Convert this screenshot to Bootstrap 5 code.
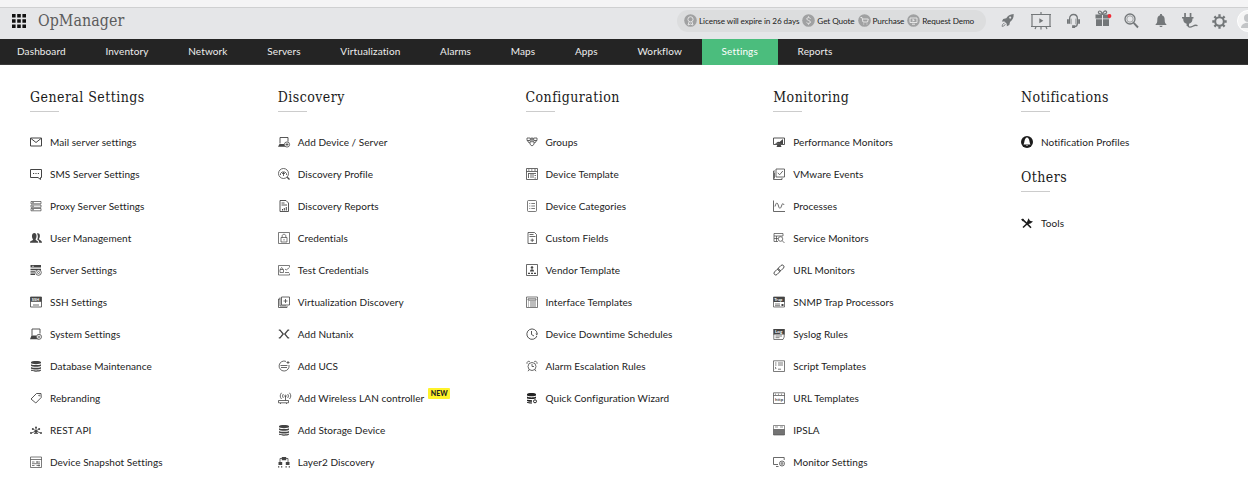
<!DOCTYPE html>
<html lang="en">
<head>
<meta charset="utf-8">
<meta name="viewport" content="width=device-width, initial-scale=1">
<title>OpManager</title>
<link href="https://cdn.jsdelivr.net/npm/bootstrap@5.3.0/dist/css/bootstrap.min.css" rel="stylesheet">
<style>
body{font-family:Lato,"Liberation Sans",sans-serif;font-size:10px;letter-spacing:.06px;line-height:16px;color:#222;background:#fff;overflow:hidden;height:486px}
svg{fill:none;stroke:currentColor;stroke-width:1;flex:none;display:block;overflow:visible}
svg .f{fill:currentColor;stroke:none}
svg .w{fill:#fff}
svg text{fill:currentColor;stroke:none;font-weight:700}
.strip{height:8px;background:#f4f4f5;border-bottom:1px solid #cfd0d1}
.topbar{height:31px;background:#e5e6e8;padding:0 0 6px 12px}
.brand{font-family:"Roboto Slab","DejaVu Serif Condensed",serif;font-weight:300;font-size:15.8px;line-height:24px;color:#5c5c5c;margin-left:12px}
.pill{height:22px;border-radius:11px;background:#dcddde;font-size:8.2px;letter-spacing:-.11px;color:#222;margin-left:auto;padding:0 10px 0 7px;width:309px}
.pill svg{color:#a0a1a2;margin-right:2px}
.pill span+svg{margin-left:3px}
.tools{color:#737779;width:262px;height:31px;position:relative}
.tools svg{position:absolute;top:4px}
.mainnav{height:26px;background:#242424;border-bottom:1px solid #3a3a3a}
.mainnav a{color:#eee;text-decoration:none;font-size:10px;letter-spacing:.12px;line-height:25px;padding:0 19.85px;white-space:nowrap}
.mainnav a:first-child{padding-left:17px}
.mainnav a.on{background:#4bbd7d;color:#fff;height:26px}
.menu{padding:21px 0 0 30px}
.menu>section{width:247.75px;flex:none}
.menu h2{font-family:"Roboto Slab","DejaVu Serif Condensed",serif;font-weight:400;font-size:14px;letter-spacing:.45px;line-height:22px;color:#1a1a1a;margin:0;white-space:nowrap}
.menu h2::after{content:"";display:block;width:29px;height:1px;background:#ccc;margin-top:3px}
.menu h2.second{margin-top:-8px}
.menu h2.second+ul{margin-top:15px}
.menu ul{margin:14px 0 0}
.menu li{height:32px;display:flex;align-items:center;gap:8px;white-space:nowrap}
.menu li svg{color:#444;width:12px;height:12px}
.newtag{background:#fff32a;color:#222;font-weight:900;font-size:7px;line-height:11px;border-radius:1px;width:22px;text-align:center;margin:-9px 0 0 -4px}
</style>
</head>
<body>
<div class="strip"></div>
<header class="topbar d-flex align-items-center">
  <svg width="14" height="14" viewBox="0 0 14 14" style="color:#111"><path class="f" d="M0 0h3.6v3.6H0zM5.2 0h3.6v3.6H5.2zM10.4 0H14v3.6h-3.6zM0 5.2h3.6v3.6H0zM5.2 5.2h3.6v3.6H5.2zM10.4 5.2H14v3.6h-3.6zM0 10.4h3.6V14H0zM5.2 10.4h3.6V14H5.2zM10.4 10.4H14V14h-3.6z"/></svg>
  <div class="brand">OpManager</div>
  <div class="pill d-flex align-items-center text-nowrap">
    <svg width="13" height="13" viewBox="0 0 13 13"><circle class="f" cx="6.5" cy="6.5" r="6.3"/><g stroke="#e5e5e5"><circle cx="6.5" cy="5.3" r="2.6"/><path d="M5 8l-1 3 2.5-1L9 11 8 8"/></g></svg><span>License will expire in 26 days</span>
    <svg width="13" height="13" viewBox="0 0 13 13"><circle class="f" cx="6.5" cy="6.5" r="6.3"/><path stroke="#e5e5e5" d="M8.500 4.700C8 3.200 4.700 3.300 4.700 4.900S8.500 6.400 8.500 8.100 5 9.700 4.500 8.300M6.500 2.300v1.300M6.500 9.400v1.300"/></svg><span>Get Quote</span>
    <svg width="13" height="13" viewBox="0 0 13 13"><circle class="f" cx="6.500" cy="6.500" r="6.300"/><path stroke="#e5e5e5" d="M2.500 3.500H4l1 4.500h4.500l.8-3H4.500M5.300 10h.9M8.500 10h.9"/></svg><span>Purchase</span>
    <svg width="13" height="13" viewBox="0 0 13 13"><circle class="f" cx="6.500" cy="6.500" r="6.300"/><path stroke="#e5e5e5" d="M3 4h7v4.500H3zM5 10.200h3"/><path fill="#e5e5e5" stroke="none" d="M5.500 4.800L8 6.200 5.500 7.700z"/></svg><span>Request Demo</span>
  </div>
  <div class="tools overflow-hidden align-self-start">
    <svg style="left:15px;top:5px" width="14" height="15" viewBox="0 0 16 17"><path class="f" d="M14.500 1C10 1.200 8 3 6 6L2.500 6.800 1 9.500l3 .2 2.500 2.500.2 3 2.800-1.600.8-3.500C13 8 14.700 5.500 14.500 1z"/><circle cx="10.500" cy="5.200" r="1.200" fill="#e5e6e8" stroke="none"/><path d="M4 11.500c-2 .3-2.500 2-2.700 3.700 1.500-.2 3.300-.8 3.600-2.500"/></svg>
    <svg style="left:45px;top:3px" width="20" height="19" viewBox="0 0 20 19"><path stroke-width="1.200" d="M1 3.500h18v12H1zM0 3.500h20M0 15.500h20M10 1v2M10 16v2.500M5 16l-1 2M15 16l1 2"/><path class="f" d="M8.300 7.200l4 2.500-4 2.500z"/></svg>
    <svg style="left:81px;top:5px" width="13" height="16" viewBox="0 0 14 17"><path stroke-width="1.400" d="M2.800 11.500V6C2.800 0 11.200 0 11.200 6v5.500M11.200 11c0 2.500-1 3.500-3 3.500"/><path class="f" d="M0 6.500h2v5H0zM12 6.500h2v5h-2zM5.500 13h3.200v3H5.500z"/><path d="M4.500 6v6M9.500 6v6" stroke-width=".7"/></svg>
    <svg style="left:109px;top:2px" width="16" height="17" viewBox="0 0 16 17"><path class="f" d="M.5 4.500H7v4H.5zM8 4.500h6.500v4H8zM1 9.300h6V16H1zM8 9.300h6V16H8z"/><path stroke-width="1.200" d="M7.500 4.500C5 4.500 2.500 3 3.700 1.500S7 2 7.500 4.500c.5-2.500 2.500-4.500 3.800-3S10 4.500 7.500 4.500"/><circle cx="14.500" cy="6" r="1.900" fill="#f22a35" stroke="none"/></svg>
    <svg style="left:138px;top:5px" width="15" height="16" viewBox="0 0 15 16"><circle cx="6" cy="6" r="5" stroke-width="1.300"/><circle cx="6" cy="6" r="3.200" stroke-width=".6"/><path stroke-width="1.900" d="M9.700 9.900l4.300 4.600"/></svg>
    <svg style="left:169px;top:5px" width="12" height="15" viewBox="0 0 13 16"><path class="f" d="M5.500 1h2v1.200C10 3 10.500 5 10.500 7.500c0 3 .8 3.800 2 5V13H.5v-.5c1.200-1.200 2-2 2-5C2.500 5 3 3 5.500 2.200zM4.700 13.700h3.600c-.4 1.800-3.200 1.800-3.600 0z"/></svg>
    <svg style="left:195px" width="17" height="17" viewBox="0 0 17 17"><path class="f" d="M3.200 1h1.700v4h3.800V1h1.700v4H12.500v1.500h-1C11.500 9.500 10.500 11 8 11.800V14H5.600v-2.200C3 11 2.200 9.500 2.200 6.500H1V5h2.200z"/><path stroke-width="1.300" d="M6.800 13c.2 3 3.200 2.200 5 1.200s3-1.500 4.700-.5"/></svg>
    <svg style="left:226px;top:5px" width="15" height="17" viewBox="0 0 15 17"><circle cx="7.500" cy="8.500" r="4.300" stroke-width="2"/><path stroke-width="2.300" d="M7.500 1.300v2.500M7.500 13.200v2.500M.3 8.500h2.500M12.200 8.500h2.500M2.400 3.400l1.800 1.800M10.800 11.800l1.800 1.800M2.400 13.600l1.800-1.800M10.800 5.200l1.800-1.800"/></svg>
    <svg style="left:251px;top:2px" width="22" height="22" viewBox="0 0 22 22"><circle cx="11" cy="11" r="10.500" fill="#f5f5f5" stroke="#fff"/><circle cx="11" cy="8" r="4" fill="#c3c5c7" stroke="none"/><path fill="#c3c5c7" stroke="none" d="M4 18c0-7 14-7 14 0z"/></svg>
  </div>
</header>
<nav class="mainnav d-flex">
  <a href="#">Dashboard</a><a href="#">Inventory</a><a href="#">Network</a><a href="#">Servers</a><a href="#">Virtualization</a><a href="#">Alarms</a><a href="#">Maps</a><a href="#">Apps</a><a href="#">Workflow</a><a href="#" class="on">Settings</a><a href="#">Reports</a>
</nav>
<main class="menu d-flex">
  <section>
    <h2>General Settings</h2>
    <ul class="list-unstyled">
      <li><svg viewBox="0 0 12 12"><path d="M.5 2h11v8H.5zM1 2.500l5 4 5-4"/></svg><span>Mail server settings</span></li>
      <li><svg viewBox="0 0 12 12"><path d="M10.500 9.500V11.500L8 9.500H.5v-8h11v8h-1M3 5.500h1.200M5.400 5.500h1.200M7.800 5.500H9"/></svg><span>SMS Server Settings</span></li>
      <li><svg viewBox="0 0 12 12" style="stroke-width:.7"><path d="M1 1.500h10v2.300H1zM1 5h10v2.300H1zM1 8.500h10v2.300H1zM2 2.700h2M2 6.200h2M2 9.700h2"/></svg><span>Proxy Server Settings</span></li>
      <li><svg viewBox="0 0 12 12"><path class="f" d="M0 10.800c0-2.600 3-1.800 3-3.500C1.500 5.500 1.500 1 4.300 1S7 5.500 5.600 7.300c0 1.700 2.700 1 2.700 3.500zM7 1.500c3.300-1 3.500 3.500 2 5.300 0 1.700 3 1.200 3 4H9.200c0-2-1-2.600-2-3.200.9-1.800 1-4-.2-6.100z"/></svg><span>User Management</span></li>
      <li><svg viewBox="0 0 12 12"><path class="f" d="M.5 1h10.500v2.600H.5zM.5 4.700H11v1.500H.5zM.5 7.300H5v1.200H.5zM.5 9.500H5V11H.5z"/><path stroke="#fff" stroke-width=".6" d="M2 2.300h2"/><circle class="w" cx="8.500" cy="8.500" r="2.800" stroke-width=".8"/><circle cx="8.500" cy="8.500" r="1" stroke-width=".7"/></svg><span>Server Settings</span></li>
      <li><svg viewBox="0 0 12 12"><path stroke-width=".8" d="M.5 1h11v10H.5z"/><path class="f" d="M.5 1h11v4.800H.5z"/><text x="1.700" y="5" font-size="4" style="fill:#fff">SSH</text><path stroke-width=".8" d="M3 9h6"/></svg><span>SSH Settings</span></li>
      <li><svg viewBox="0 0 12 12"><path stroke-width=".9" d="M2 7.500V1h8v4.500"/><path class="f" d="M1.500 7.500h5V9.500H9v1.800H0z"/><circle class="w" cx="9" cy="8.800" r="2.500" stroke-width=".8"/><circle cx="9" cy="8.800" r=".8" stroke-width=".7"/></svg><span>System Settings</span></li>
      <li><svg viewBox="0 0 12 12"><path class="f" d="M1 2c0-1.500 10-1.500 10 0v1c0 1.500-10 1.500-10 0zM1 4.200c2 1.200 8 1.200 10 0v1.600c-1 1.300-9 1.300-10 0zM1 6.900c2 1.200 8 1.200 10 0v1.600c-1 1.300-9 1.300-10 0zM1 9.500c2 1.200 8 1.200 10 0v1c-1 1.600-9 1.600-10 0z"/></svg><span>Database Maintenance</span></li>
      <li><svg viewBox="0 0 12 12"><path stroke-width=".9" d="M1 7L6.500 1.500H11l.2 4L5.800 11z"/><circle cx="9.200" cy="3.500" r=".5" stroke-width=".7"/></svg><span>Rebranding</span></li>
      <li><svg viewBox="0 0 12 12"><path stroke-width=".8" d="M6 7V4M6 7L3 5M6 7l3-2M6 7L1.500 9M6 7l4.500 2M4 9.500h4"/><g class="f"><circle cx="6" cy="3.500" r="1"/><circle cx="2.800" cy="5" r="1"/><circle cx="9.200" cy="5" r="1"/><circle cx="1" cy="9" r="1"/><circle cx="11" cy="9" r="1"/><circle cx="6" cy="7.500" r="1.500"/></g></svg><span>REST API</span></li>
      <li><svg viewBox="0 0 12 12" style="stroke-width:.7"><path d="M.5 1h11v10.500H.5zM.5 3.500h11M2 6h2.500M2 9.500h2.500M6.500 6H10M6.500 9.500H10M7 5v2M9 8.500v2M2 7.700h8"/></svg><span>Device Snapshot Settings</span></li>
    </ul>
  </section>
  <section>
    <h2>Discovery</h2>
    <ul class="list-unstyled">
      <li><svg viewBox="0 0 12 12"><path stroke-width=".9" d="M2 7.500V1.500h8v4"/><path class="f" d="M1.500 8h4.500l.5 1.200H8v1.600H0z"/><circle class="w" cx="9" cy="8.500" r="2.600" stroke-width=".8"/><path stroke-width=".8" d="M7.500 8.500h3M9 7v3"/></svg><span>Add Device / Server</span></li>
      <li><svg viewBox="0 0 12 12" style="stroke-width:.8"><circle cx="5.500" cy="5.500" r="5"/><path stroke-width="1.300" d="M9.200 9.200l2.300 2.300"/><path d="M2.500 7V5.500L4 4h3l1.500 1.500V7M5.500 4v4M4 5.500h3"/></svg><span>Discovery Profile</span></li>
      <li><svg viewBox="0 0 12 12"><path stroke-width=".9" d="M2 .5h6l2.500 2.500v8.500H2zM3.500 3h3M3.500 5h5.500"/><path d="M4.500 10.500V9M6.300 10.500V8M8.300 10.500V7"/></svg><span>Discovery Reports</span></li>
      <li><svg viewBox="0 0 12 12" style="stroke-width:.7"><path d="M.5.5h11v11H.5zM3 5.500h6v4.500H3zM4.200 5.500V3.800c0-2 3.600-2 3.600 0v1.700M6 7v1.500"/></svg><span>Credentials</span></li>
      <li><svg viewBox="0 0 12 12" style="stroke-width:.7"><path d="M11.500 3V1.500H.5v9.500h11V9.500M2 5.500h3.500V8.500H2zM2.700 5.500c0-2.500 2-2.500 2 0M7 5l1.200 1L11.500 3.500M7 8.500h4"/></svg><span>Test Credentials</span></li>
      <li><svg viewBox="0 0 12 12" style="stroke-width:.8"><path d="M3.500 1h8v8h-8zM2 3H.5v8.500H9V10M2 1.500V10h6M7.500 3v4M5.500 5h4"/></svg><span>Virtualization Discovery</span></li>
      <li><svg viewBox="0 0 12 12"><path stroke-width="1.300" d="M.8 2.200h1.200L5.200 6 2 9.800H.8M11.200 2.200H10L6.800 6l3.200 3.800h1.200"/></svg><span>Add Nutanix</span></li>
      <li><svg viewBox="0 0 12 12" style="stroke-width:.8"><path d="M8 1.400A5 5 0 1 0 11 5M2.500 5.500h7M3 7.500h6M8.500 2.500h3M10 1v3"/></svg><span>Add UCS</span></li>
      <li><svg viewBox="0 0 12 12" style="stroke-width:.8"><path d="M.5 8.500h10v2.300H.5zM7.500 8.500V4M5.500 2c-1.200 1-1.200 3 0 4M9.500 2c1.200 1 1.200 3 0 4M3.500.8C1.800 3 1.800 5 3.500 7M11.500.8c1.700 2.200 1.700 4.200 0 6.200M2 11.500h1M8 11.500h1"/><circle cx="7.500" cy="4" r=".8"/></svg><span>Add Wireless LAN controller</span><b class="newtag">NEW</b></li>
      <li><svg viewBox="0 0 12 12"><path class="f" d="M1 2c0-1.500 10-1.500 10 0v1c0 1.500-10 1.500-10 0zM1 4.200c2 1.200 8 1.200 10 0v1.600c-1 1.300-9 1.300-10 0zM1 6.900c2 1.200 8 1.200 10 0v1.600c-1 1.300-9 1.300-10 0zM1 9.500c2 1.200 8 1.200 10 0v1c-1 1.600-9 1.600-10 0z"/></svg><span>Add Storage Device</span></li>
      <li><svg viewBox="0 0 12 12"><path class="f" d="M3.800 1h4.400v3.300H3.800zM.5 6h3.700v3H.5zM7.800 6h3.700v3H7.800zM0 10.300h1.300v1.200H0zM3 10.300h1.300v1.200H3zM7.500 10.300h1.300v1.200H7.500zM10.700 10.300H12v1.200h-1.300z"/><path stroke-width=".8" d="M4 2.500H2V6M8 2.500h2V6"/></svg><span>Layer2 Discovery</span></li>
    </ul>
  </section>
  <section>
    <h2>Configuration</h2>
    <ul class="list-unstyled">
      <li><svg viewBox="0 0 12 12" style="stroke-width:.8"><path d="M1 2h3.300v2.500H1zM7.700 2H11v2.500H7.700zM5.200 2h1.600v2.200H5.200zM2 4.500V6l2 1M10 4.500V6L8 7M4 5.700h4v2.600L6 10 4 8.300z"/></svg><span>Groups</span></li>
      <li><svg viewBox="0 0 12 12" style="stroke-width:.8"><path d="M.5.5h11v11H.5zM.5 3.500h11M2 2h1.500M5 2h1.500M8 2h2M2 5.500h8M2.500 5.500V10M5 6v4M7 6v4M8.500 7.500H10M8.500 10H10"/></svg><span>Device Template</span></li>
      <li><svg viewBox="0 0 12 12" style="stroke-width:.7"><rect x="1.500" y=".5" width="9" height="11" rx="1"/><path d="M3.300 3.500h1M5.300 3.500H9M3.300 6h1M5.300 6H9M3.300 8.500h1M5.300 8.500H9"/></svg><span>Device Categories</span></li>
      <li><svg viewBox="0 0 12 12" style="stroke-width:.8"><path d="M2 .5h6.500l2 2v9H2zM3.500 2.500h4M3.500 4.500h6M6.200 6.500v3.500M4.500 8.200H8"/></svg><span>Custom Fields</span></li>
      <li><svg viewBox="0 0 12 12"><path stroke-width=".8" d="M.5.5h11v11H.5z"/><circle class="f" cx="6" cy="3.500" r="1.300"/><path class="f" d="M4 7.500c0-3 4-3 4 0zM2 8.700h2V10H2zM5 8.700h2V10H5zM8 8.700h2V10H8z"/></svg><span>Vendor Template</span></li>
      <li><svg viewBox="0 0 12 12" style="stroke-width:.7"><path d="M.5 1h11v10.500H.5zM2 2.800h8v1.400H2zM2 6h1M4 6h6M2 8h1M4 8h6M2 10h1M4 10h6"/></svg><span>Interface Templates</span></li>
      <li><svg viewBox="0 0 12 12"><path stroke-width=".9" d="M10.900 8A5.200 5.200 0 1 1 11.200 5.500M5.500 3v3.500L8 8"/><path class="f" d="M9.500 5.500H12L10.800 7.500z"/></svg><span>Device Downtime Schedules</span></li>
      <li><svg viewBox="0 0 12 12" style="stroke-width:.8"><circle cx="6" cy="6.500" r="4"/><path d="M6 4v2.500h2M3 9.700l-1 1.500M9 9.700l1 1.500M1 3.800C.5 2 2.200.8 3.800 1.500M11 3.800C11.500 2 9.800.8 8.200 1.500"/></svg><span>Alarm Escalation Rules</span></li>
      <li><svg viewBox="0 0 12 12" style="color:#222"><path class="f" d="M1 2c0-1.500 9-1.500 9 0v1.200c0 1.500-9 1.500-9 0zM1 4.600c2 1.200 7 1.200 9 0v1.600c-1 .8-4 1.200-9 .3zM1 7.700l5 .5v1.500c-2 .2-4 0-5-.7zM1 10l5 .5v1c-2 .1-4-.2-5-.7z"/><circle cx="9" cy="9.300" r="1.500"/></svg><span>Quick Configuration Wizard</span></li>
    </ul>
  </section>
  <section>
    <h2>Monitoring</h2>
    <ul class="list-unstyled">
      <li><svg viewBox="0 0 12 12"><path stroke-width=".9" d="M.5 2h11v6.500H.5z"/><path class="f" d="M2 7.800l3-2 1.500.3L10 3v5zM4.500 8.500h3l1 2.500h-5z"/></svg><span>Performance Monitors</span></li>
      <li><svg viewBox="0 0 12 12" style="stroke-width:.8"><path d="M3 1h8.500v8H3zM2 3H.5v8.500H9V10M1.500 4.500v6M4.800 4.800l1.800 2L9.800 3"/></svg><span>VMware Events</span></li>
      <li><svg viewBox="0 0 12 12" style="stroke-width:.8"><path d="M.5.500v11h11.500M2 6.500C3.500 1 4.700 3 5.500 6s2 3 3 0 1.500-3 2.500-1"/></svg><span>Processes</span></li>
      <li><svg viewBox="0 0 12 12" style="stroke-width:.7"><path d="M10 4V1.500H1v8h4M1 4h9M1 6.500h4M3.500 4v5.500"/><circle cx="7.500" cy="7" r="2.300"/><path d="M9.200 8.700l2.300 2.300"/></svg><span>Service Monitors</span></li>
      <li><svg viewBox="0 0 12 12"><g transform="rotate(-45 6 6)" stroke-width=".9"><rect x="-.3" y="4.200" width="7" height="3.600" rx="1.800"/><rect x="5.300" y="4.200" width="7" height="3.600" rx="1.800"/></g></svg><span>URL Monitors</span></li>
      <li><svg viewBox="0 0 12 12"><path stroke-width=".7" d="M.5 1h11v10H.5zM2 8h5M2 9.700h5"/><path class="f" d="M.5 1h11v5H.5zM8.500 8h2v2h-2z"/><text x="1.300" y="4.900" font-size="4" style="fill:#fff">Trap</text></svg><span>SNMP Trap Processors</span></li>
      <li><svg viewBox="0 0 12 12"><path stroke-width=".7" d="M.8 6v5.500H10L11.200 9V6M2.500 8h6.500M2.500 9.700h4"/><path class="f" d="M.3 1h11.500v5.500H.3z"/><text x="2" y="5.100" font-size="4.500" style="fill:#fff">Log</text></svg><span>Syslog Rules</span></li>
      <li><svg viewBox="0 0 12 12" style="stroke-width:.7"><path d="M.5.8h11v10.700H.5zM2 3h1.500M5 3h5M2 5h1.500M5 5h5M2 7l1.200 1L2 9.200M5 9.200h3"/></svg><span>Script Templates</span></li>
      <li><svg viewBox="0 0 12 12" style="stroke-width:.7"><path d="M.5.8h11v10.700H.5zM.5 3.500h11M2 2.200h1M5 2.200h1M8 2.200h1"/><text x="2" y="8.800" font-size="4.300">http</text></svg><span>URL Templates</span></li>
      <li><svg viewBox="0 0 12 12"><path stroke-width=".6" d="M.5 1.500h11v9.500H.5zM2 3h3M7 3h3"/><path class="f" opacity=".75" d="M.5 5h11v6H.5z"/></svg><span>IPSLA</span></li>
      <li><svg viewBox="0 0 12 12" style="stroke-width:.8"><path d="M11.200 4V1.500H.5V8.500H5M3 10.500h2.500"/><circle cx="9" cy="7.500" r="2.500"/><circle cx="9" cy="7.500" r=".9"/></svg><span>Monitor Settings</span></li>
    </ul>
  </section>
  <section>
    <h2>Notifications</h2>
    <ul class="list-unstyled mb-3">
      <li><svg viewBox="0 0 12 12" style="color:#1c1c1c"><circle class="f" cx="6" cy="6" r="6"/><path class="w" stroke="none" d="M5.500 1.500h1C9 3 8 6 9.500 8.500h-7C4 6 3 3 5.500 1.500zM5 9.200h2C6.700 10.300 5.300 10.300 5 9.200z"/></svg><span>Notification Profiles</span></li>
    </ul>
    <h2 class="second">Others</h2>
    <ul class="list-unstyled">
      <li><svg viewBox="0 0 12 12" style="color:#1c1c1c"><path stroke-width="1.600" d="M1.500 2.500l4 3.700 4.500 4.500M8.500 4.500L2 10.500"/><path class="f" d="M0 2.500l2-1 1.500 2-1.500 1zM6 5l1.500-3.800L9 3.800l3 .7-2.500 2-4 1z"/></svg><span>Tools</span></li>
    </ul>
  </section>
</main>
<script src="https://cdn.jsdelivr.net/npm/bootstrap@5.3.0/dist/js/bootstrap.bundle.min.js"></script>
</body>
</html>
